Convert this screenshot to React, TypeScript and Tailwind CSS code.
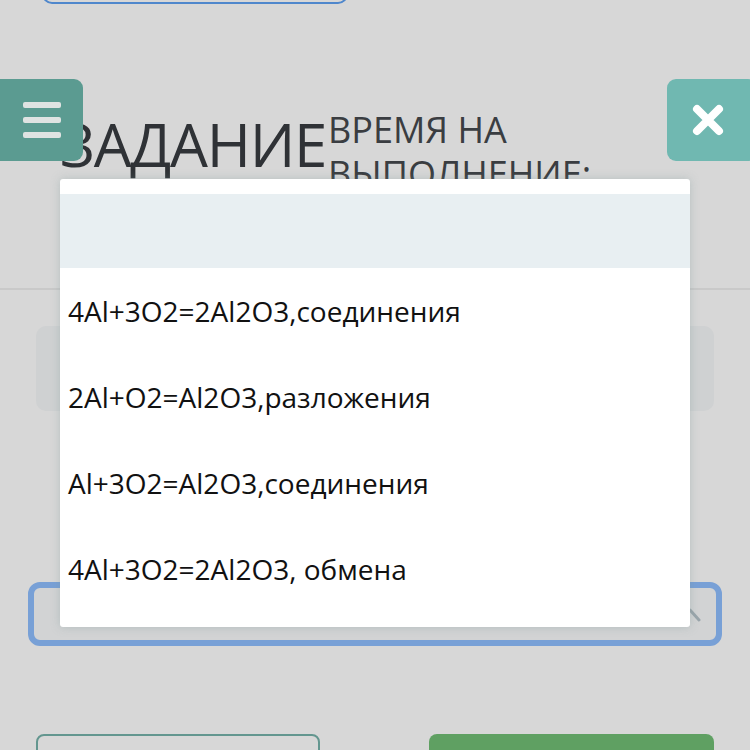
import React from "react";

const items = [
  "4Al+3O2=2Al2O3,соединения",
  "2Al+O2=Al2O3,разложения",
  "Al+3O2=Al2O3,соединения",
  "4Al+3O2=2Al2O3, обмена",
];

export default function App() {
  return (
    <div
      className="relative w-[750px] h-[750px] overflow-hidden bg-[#d7d7d7]"
      style={{ fontFamily: '"Open Sans", "Noto Sans", sans-serif' }}
    >
      {/* top partial box */}
      <div className="ml-[42px] mt-[-30px] h-[34px] w-[306px] rounded-[10px] border-2 border-[#4f87cc]" />

      {/* header section */}
      <div className="relative h-[286px] border-b-2 border-[#c9c9c9]">
        <div className="flex items-start pl-[60px] pt-[104px]">
          <div className="text-[60px] leading-none tracking-[-1.3px] text-[#2f3236] mt-[6px]">
            ЗАДАНИЕ
          </div>
          <div className="ml-[2px] text-[36px] leading-[44px] text-[#3a3d41]">
            ВРЕМЯ НА
            <br />
            ВЫПОЛНЕНИЕ:
          </div>
        </div>

        {/* menu button */}
        <div className="absolute left-0 top-[75px] flex h-[82px] w-[83px] flex-col items-center justify-center gap-[9px] rounded-r-[9px] bg-[#5b9b91]">
          <div className="h-[6px] w-[38px] rounded-[2px] bg-[#dfe3e2]" />
          <div className="h-[6px] w-[38px] rounded-[2px] bg-[#dfe3e2]" />
          <div className="h-[6px] w-[38px] rounded-[2px] bg-[#dfe3e2]" />
        </div>

        {/* close button */}
        <div className="absolute left-[667px] top-[75px] flex h-[82px] w-[90px] items-center rounded-[9px] bg-[#70b8b1] pl-[25px]">
          <svg width="32" height="32" viewBox="0 0 32 32">
            <path
              d="M5 5 L27 27 M27 5 L5 27"
              stroke="#ffffff"
              strokeWidth="8"
              strokeLinecap="round"
            />
          </svg>
        </div>
      </div>

      {/* gray box */}
      <div className="mx-[36px] mt-[36px] h-[85px] rounded-[10px] bg-[#cfd1d2]" />

      {/* select box */}
      <div className="relative mx-[28px] mt-[171px] h-[64px] rounded-[12px] border-[6px] border-[#78a0d6] bg-[#d2d3d4]">
        <svg
          className="absolute right-[14px] top-[20px]"
          width="14"
          height="16"
          viewBox="0 0 14 16"
        >
          <path d="M2 2 L11 12" stroke="#9aa5ab" strokeWidth="3" strokeLinecap="round" />
        </svg>
      </div>

      {/* bottom buttons */}
      <div className="mt-[88px] flex justify-between px-[36px]">
        <div className="h-[50px] w-[284px] rounded-[8px] border-2 border-[#63968f]" />
        <div className="h-[50px] w-[285px] rounded-[8px] bg-[#5fa062]" />
      </div>

      {/* dropdown */}
      <div className="absolute left-[60px] top-[179px] w-[630px] rounded-[3px] bg-white pt-[15px] pb-[15px] shadow-[0_0_10px_rgba(120,150,150,0.35)]">
        <div className="h-[74px] bg-[#e8eff2]" />
        {items.map((t) => (
          <div
            key={t}
            className="flex h-[86px] items-center pl-[8px] text-[28px] text-[#111111]"
          >
            {t}
          </div>
        ))}
      </div>
    </div>
  );
}
